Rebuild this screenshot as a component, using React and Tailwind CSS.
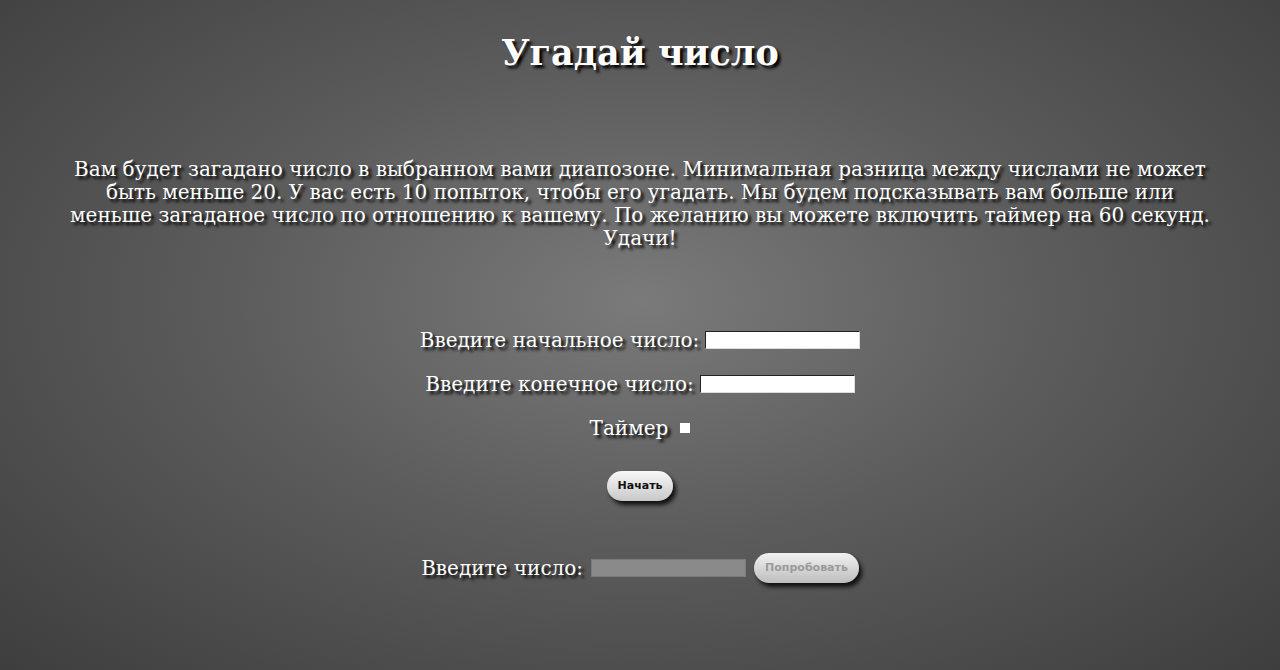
export default function App() {
  const shadow = "[text-shadow:3px_3px_3px_#000]";
  const field =
    "w-[155px] h-[18px] bg-white border border-t-[#222] border-l-[#222] border-b-[#ddd] border-r-[#ddd] text-black text-sm";
  return (
    <div className="min-h-[670px] w-full bg-[radial-gradient(ellipse_at_50%_45%,#7a7a7a_0%,#5c5c5c_45%,#3e3e3e_100%)] text-white font-['DejaVu_Serif',serif] flex flex-col items-center">
      <h1 className={`mt-[30px] text-[35px] font-bold leading-[46px] ${shadow}`}>
        Угадай число
      </h1>

      <p className={`mt-[82px] px-[70px] text-center text-[20px] leading-[23px] ${shadow}`}>
        Вам будет загадано число в выбранном вами диапозоне. Минимальная разница между числами не может быть меньше 20. У вас есть 10 попыток, чтобы его угадать. Мы будем подсказывать вам больше или меньше загаданое число по отношению к вашему. По желанию вы можете включить таймер на 60 секунд. Удачи!
      </p>

      <div className="mt-[78px] flex flex-col items-center gap-[20px] text-[20px] leading-[24px]">
        <label className="flex items-center gap-[6px]">
          <span className={shadow}>Введите начальное число:</span>
          <input className={field} />
        </label>
        <label className="flex items-center gap-[6px]">
          <span className={shadow}>Введите конечное число:</span>
          <input className={field} />
        </label>
        <label className="flex items-center gap-[12px]">
          <span className={shadow}>Таймер</span>
          <span className="w-[10px] h-[10px] bg-white inline-block" />
        </label>
      </div>

      <button className="mt-[31px] h-[30px] px-[11px] rounded-full bg-[linear-gradient(#f8f8f8,#c8c8c8)] shadow-[3px_4px_4px_#111] text-[11px] font-bold text-[#111] font-['DejaVu_Sans',sans-serif]">
        Начать
      </button>

      <div className="mt-[52px] flex items-center gap-[8px] text-[20px] leading-[24px]">
        <span className={shadow}>Введите число:</span>
        <input disabled className="w-[155px] h-[18px] bg-[#8a8a8a] border border-[#7a7a7a]" />
        <button disabled className="h-[30px] px-[11px] rounded-full bg-[linear-gradient(#f2f2f2,#bdbdbd)] shadow-[3px_4px_4px_#111] text-[11px] font-bold text-[#9a9a9a] font-['DejaVu_Sans',sans-serif]">
          Попробовать
        </button>
      </div>
    </div>
  );
}
